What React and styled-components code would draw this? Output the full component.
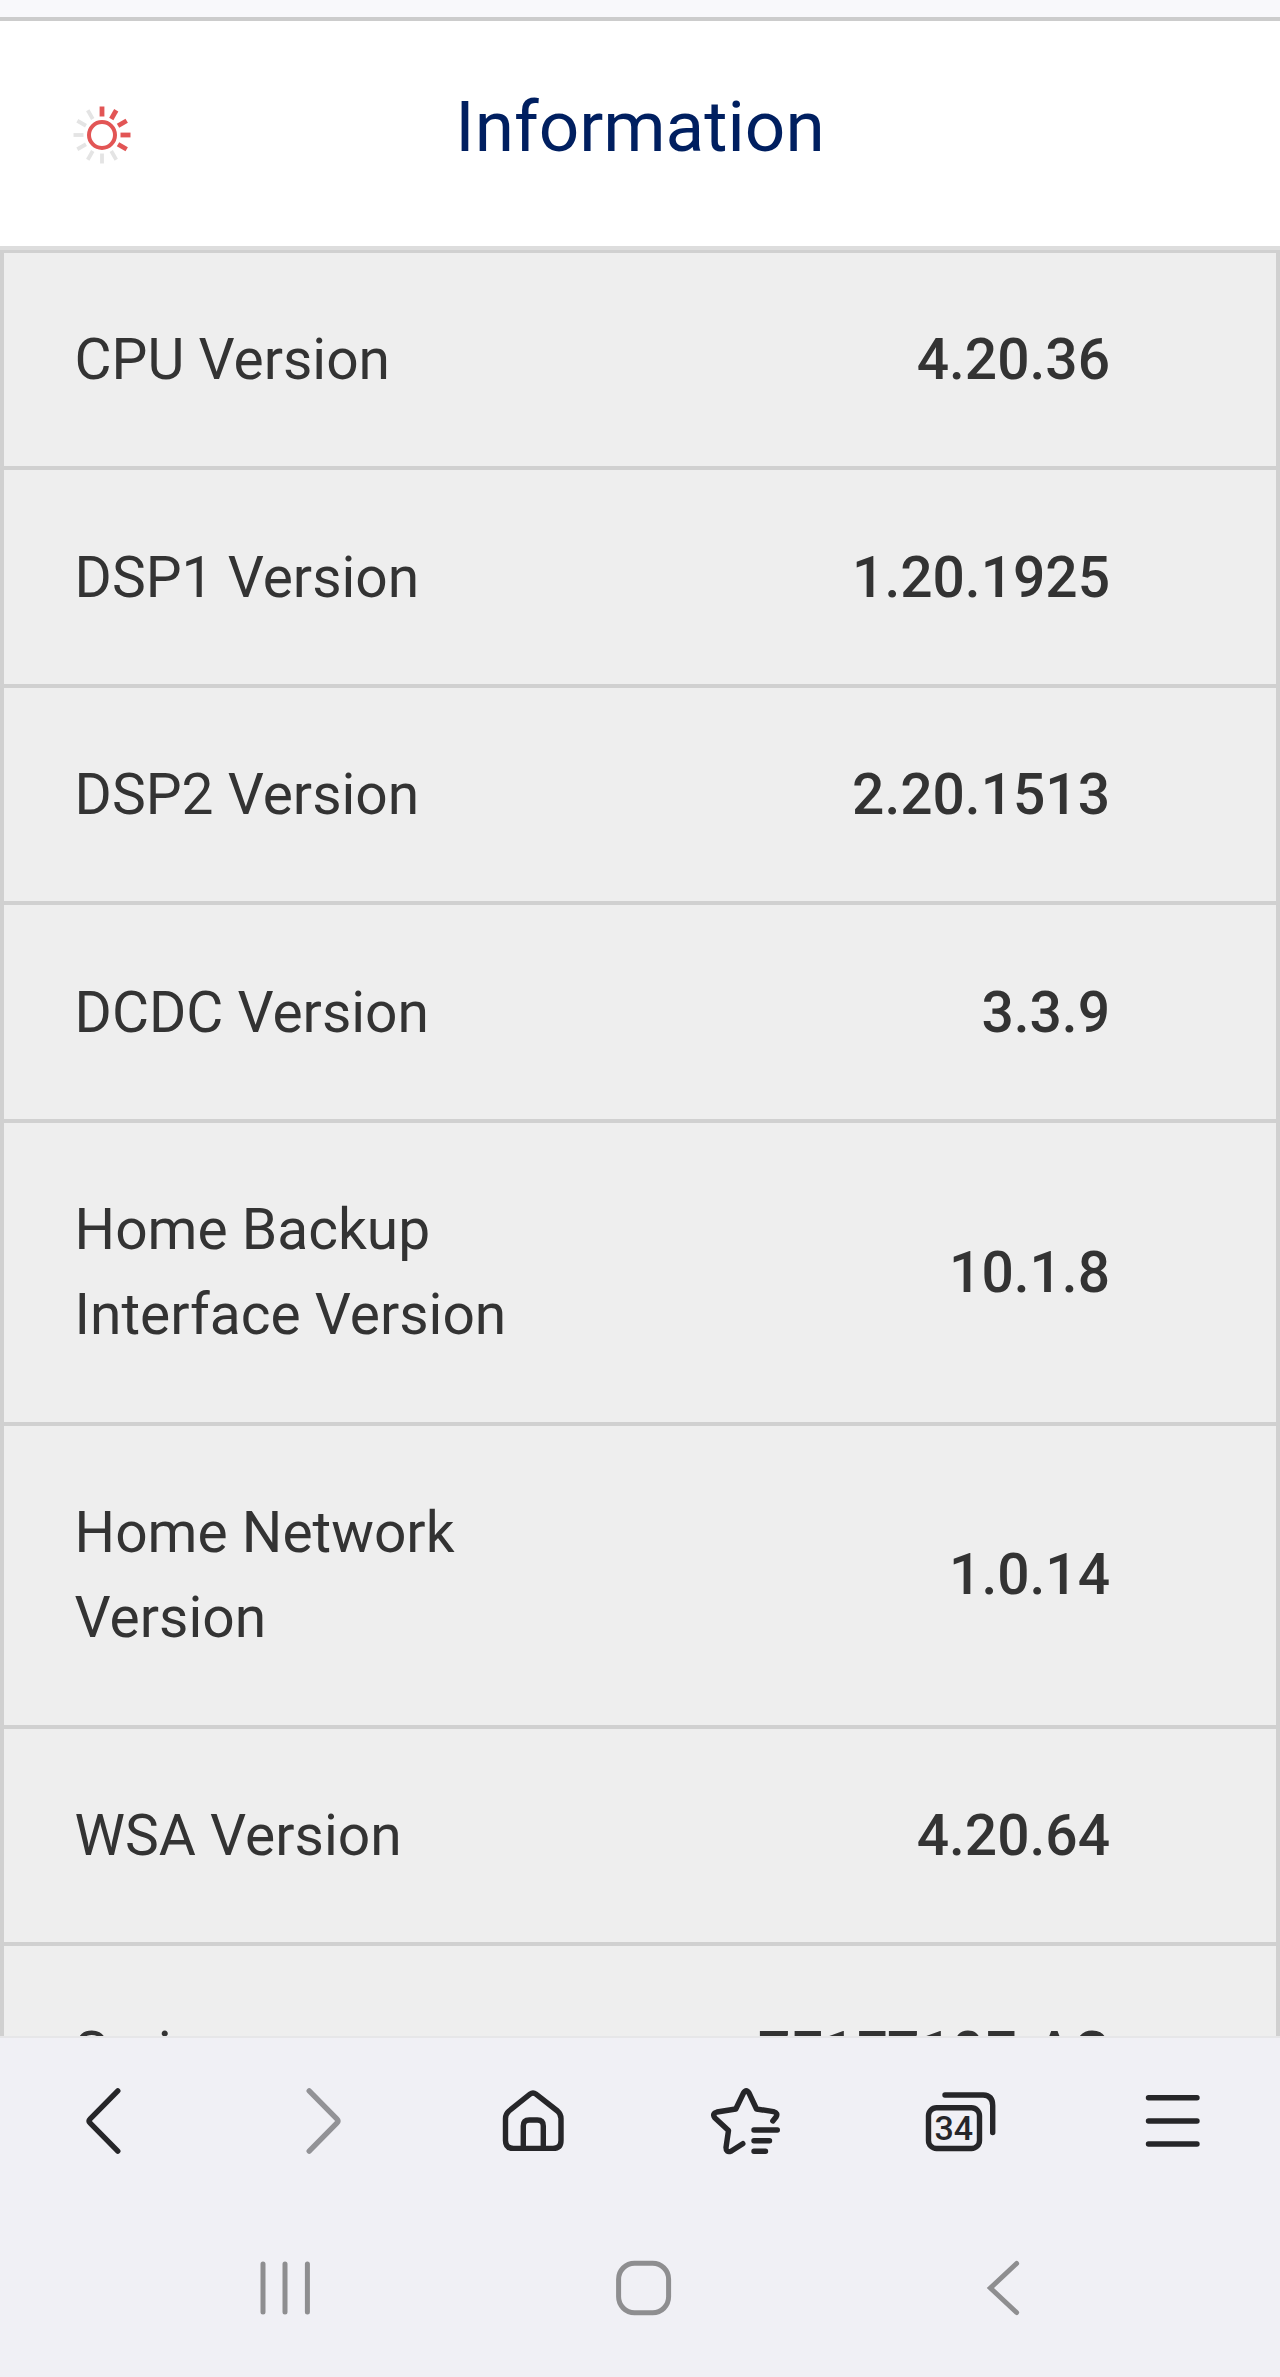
import React from 'react';
import styled, { createGlobalStyle } from 'styled-components';

const GlobalStyle = createGlobalStyle`
    * {
        box-sizing: border-box;
    }
    body {
        margin: 0;
        background: #f0f0f5;
        font-family: Roboto, "Liberation Sans", sans-serif;
    }
`;

const StyledScreen = styled.div`
    width: 1280px;
    height: 2377px;
    display: flex;
    flex-direction: column;
    overflow: hidden;
`;
const StyledAddressBar = styled.div`
    flex: none;
    height: 21px;
    background: #f8f8fb;
    border-bottom: 4px solid #cccccc;
`;
const StyledHeader = styled.header`
    flex: none;
    height: 229px;
    padding: 0 72px;
    display: grid;
    grid-template-columns: 60px 1fr 60px;
    align-items: start;
    background: #ffffff;
    border-bottom: 4px solid #dddddd;
`;
const StyledHeader__Logo = styled.svg`
    width: 60px;
    height: 60px;
    margin-top: 84px;
`;
const StyledHeader__Title = styled.h1`
    margin: 64px 0 0;
    color: #001f60;
    font-size: 71.1px;
    font-weight: 400;
    line-height: 84px;
    text-align: center;
`;

const StyledList = styled.main`
    flex: none;
    height: 1786px;
    overflow: hidden;
    background: #eeeeee;
    border: solid #d0d0d0;
    border-width: 3px 4px 0;
`;
const StyledRow = styled.div`
    display: flex;
    justify-content: space-between;
    align-items: center;
    padding: 64.1px 166px 64.1px 70.6px;
    border-bottom: 4px solid #d0d0d0;
    color: #333333;
    font-size: 56.9px;
    line-height: 85.3px;
`;
const StyledRow__Label = styled.span`
    max-width: 480px;
`;
const StyledRow__Value = styled.span`
    font-weight: 500;
`;

const StyledToolbar = styled.nav`
    flex: none;
    height: 168px;
    display: flex;
    align-items: center;
    background: #f0f0f5;
    border-top: 2px solid #e6e6e8;
`;
const StyledSystemBar = styled.nav`
    flex: 1;
    display: flex;
    padding: 48px 98px 0 106px;
    background: #f0f0f5;
`;
const StyledCell = styled.button`
    flex: 1;
    display: flex;
    justify-content: center;
    align-items: flex-start;
    padding: 0;
    border: 0;
    background: none;
`;
const StyledIcon = styled.svg`
    width: 72px;
    height: 72px;
    fill: none;
    stroke: ${props => props.$color || '#262629'};
    stroke-width: ${props => props.$weight || 5.4};
    stroke-linecap: round;
    stroke-linejoin: round;

    text {
        fill: #262629;
        stroke: none;
        font-family: Roboto, "Liberation Sans", sans-serif;
        font-size: 34px;
        font-weight: 500;
    }
`;

const rows = [
    { label: 'CPU Version', value: '4.20.36' },
    { label: 'DSP1 Version', value: '1.20.1925' },
    { label: 'DSP2 Version', value: '2.20.1513' },
    { label: 'DCDC Version', value: '3.3.9' },
    { label: 'Home Backup Interface Version', value: '10.1.8' },
    { label: 'Home Network Version', value: '1.0.14' },
    { label: 'WSA Version', value: '4.20.64' },
    { label: 'Series', value: '7E1E710E-AC' },
];

const rays = [-90, -60, -30, 0, 30, 60, 90, 120, 150, 180, 210, 240];

function Logo() {
    return (
        <StyledHeader__Logo viewBox="-30 -30 60 60" fill="none">
            <circle r="13" stroke="#e25555" strokeWidth="4" />
            {rays.map((angle, i) => (
                <line
                    key={angle}
                    x1="18.5"
                    x2="28.5"
                    stroke={i < 5 ? '#e25555' : '#e4e4e4'}
                    strokeWidth={i < 5 ? 4.8 : 3.8}
                    transform={`rotate(${angle})`}
                />
            ))}
        </StyledHeader__Logo>
    );
}

function Toolbar() {
    return (
        <StyledToolbar>
            <StyledCell aria-label="Back">
                <StyledIcon viewBox="0 0 72 72">
                    <path d="M46.8 5.8 L19.2 33.8 Q17 36 19.2 38.2 L46.8 66.2" />
                </StyledIcon>
            </StyledCell>
            <StyledCell aria-label="Forward">
                <StyledIcon viewBox="0 0 72 72" $color="#929296">
                    <path d="M25.2 5.8 L52.8 33.8 Q55 36 52.8 38.2 L25.2 66.2" />
                </StyledIcon>
            </StyledCell>
            <StyledCell aria-label="Home">
                <StyledIcon viewBox="0 0 72 72">
                    <path d="M33 9.2 Q36 6.8 39 9.2 L60.5 26 Q64 29 64 33.5 V55.5 Q64 63.4 56 63.4 H16.5 Q8.5 63.4 8.5 55.5 V33.5 Q8.5 29 12 26 Z" />
                    <path d="M26.3 63 V41 Q26.3 35 32.3 35 H40.3 Q46.3 35 46.3 41 V63" />
                </StyledIcon>
            </StyledCell>
            <StyledCell aria-label="Bookmarks">
                <StyledIcon viewBox="0 0 72 72">
                    <path d="M61.8 36 L65 32 Q67.5 28 62.5 26.6 L45.5 24 L38 8 Q35.2 3.5 32.5 8 L24.8 24 L6 27 Q0.5 28.5 4 33 L17.5 45.5 L15 62.5 Q15 68 20 66.2 L31.8 58.7" />
                    <path d="M43 45 H66.3 M43 55.8 H58.5 M43 66.2 H54.5" />
                </StyledIcon>
            </StyledCell>
            <StyledCell aria-label="Tabs">
                <StyledIcon viewBox="0 0 72 72">
                    <rect x="4.5" y="22.7" width="51" height="40.8" rx="8" />
                    <path d="M21 10 H59.2 Q68.7 10.5 68.7 20.5 V47.5" />
                    <text x="29.8" y="55.2" textAnchor="middle">34</text>
                </StyledIcon>
            </StyledCell>
            <StyledCell aria-label="Menu">
                <StyledIcon viewBox="0 0 72 72">
                    <path d="M11.5 12.7 H60 M11.5 36 H60 M11.5 59 H60" />
                </StyledIcon>
            </StyledCell>
        </StyledToolbar>
    );
}

function SystemBar() {
    return (
        <StyledSystemBar>
            <StyledCell aria-label="Recent apps">
                <StyledIcon viewBox="0 0 72 72" $color="#8e8e90" $weight={5}>
                    <path d="M14 12 V60 M36 12 V60 M58.4 12 V60" />
                </StyledIcon>
            </StyledCell>
            <StyledCell aria-label="Home screen">
                <StyledIcon viewBox="0 0 72 72" $color="#8e8e90" $weight={5}>
                    <rect x="10.6" y="11.2" width="50" height="49.6" rx="16" />
                </StyledIcon>
            </StyledCell>
            <StyledCell aria-label="Back">
                <StyledIcon viewBox="0 0 72 72" $color="#8e8e90" $weight={5}>
                    <path strokeLinejoin="miter" d="M49.6 11.5 L23.4 36 L49.6 60.5" />
                </StyledIcon>
            </StyledCell>
        </StyledSystemBar>
    );
}

function App() {
    return (
        <>
            <GlobalStyle />
            <StyledScreen>
                <StyledAddressBar />
                <StyledHeader>
                    <Logo />
                    <StyledHeader__Title>Information</StyledHeader__Title>
                </StyledHeader>
                <StyledList>
                    {rows.map(({ label, value }) => (
                        <StyledRow key={label}>
                            <StyledRow__Label>{label}</StyledRow__Label>
                            <StyledRow__Value>{value}</StyledRow__Value>
                        </StyledRow>
                    ))}
                </StyledList>
                <Toolbar />
                <SystemBar />
            </StyledScreen>
        </>
    );
}

export default App;
